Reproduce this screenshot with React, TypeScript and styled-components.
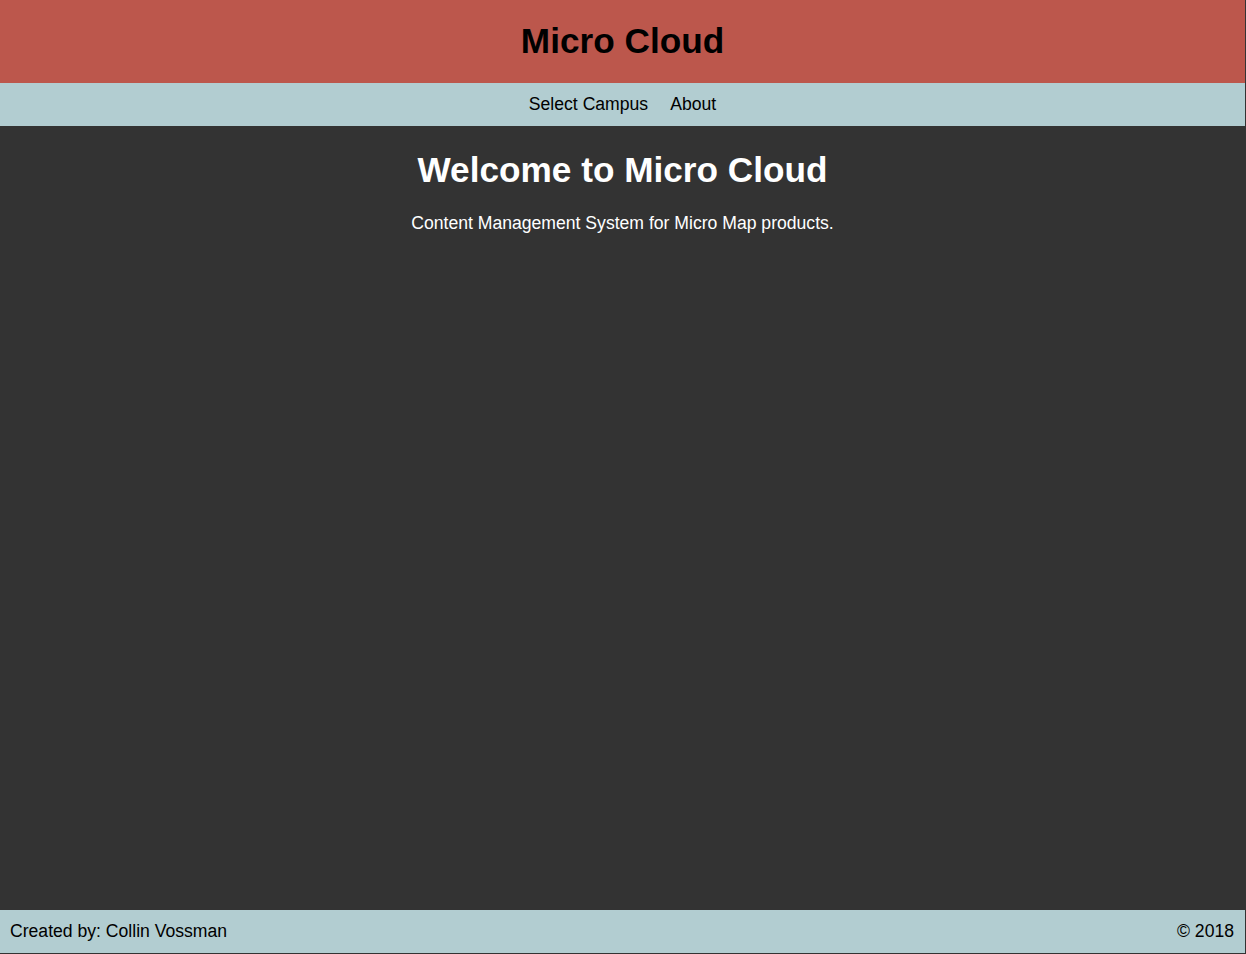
import React from "react";
import styled, { createGlobalStyle } from "styled-components";

const GlobalStyle = createGlobalStyle`
  html, body {
    margin: 0;
    padding: 0;
    background: #333333;
    font-family: "Liberation Sans", Arial, sans-serif;
  }
  * { box-sizing: border-box; }
`;

const Page = styled.div`
  width: calc(100% - 1px);
  min-height: 100vh;
  display: flex;
  flex-direction: column;
`;

const Header = styled.header`
  height: 83px;
  padding-bottom: 2px;
  background: #bc574c;
  display: flex;
  align-items: center;
  justify-content: center;
`;

const SiteTitle = styled.h1`
  margin: 0;
  font-size: 35.2px;
  font-weight: bold;
  color: #000;
`;

const Nav = styled.nav`
  height: 43px;
  background: #b2cdd1;
  display: flex;
  align-items: center;
  justify-content: center;
  gap: 22px;
`;

const NavLink = styled.a`
  font-size: 17.6px;
  color: #000;
  text-decoration: none;
  cursor: pointer;
`;

const Main = styled.main`
  flex: 1;
  display: flex;
  flex-direction: column;
  align-items: center;
  padding-top: 24px;
  color: #fff;
`;

const Heading = styled.h2`
  margin: 0;
  font-size: 35.2px;
  font-weight: bold;
  line-height: 40px;
`;

const Tagline = styled.p`
  margin: 23px 0 0;
  font-size: 17.6px;
  line-height: 20px;
`;

const Footer = styled.footer`
  height: 43px;
  margin-bottom: 1px;
  background: #b2cdd1;
  display: flex;
  align-items: center;
  justify-content: space-between;
  padding: 0 11px 0 10px;
  font-size: 17.6px;
  color: #000;
`;

export default function App() {
  return (
    <>
      <GlobalStyle />
      <Page>
        <Header>
          <SiteTitle>Micro Cloud</SiteTitle>
        </Header>
        <Nav>
          <NavLink>Select Campus</NavLink>
          <NavLink>About</NavLink>
        </Nav>
        <Main>
          <Heading>Welcome to Micro Cloud</Heading>
          <Tagline>Content Management System for Micro Map products.</Tagline>
        </Main>
        <Footer>
          <span>Created by: Collin Vossman</span>
          <span>© 2018</span>
        </Footer>
      </Page>
    </>
  );
}
